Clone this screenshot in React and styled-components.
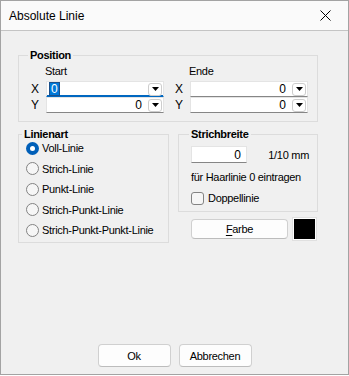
import React from "react";
import styled, { createGlobalStyle, css } from "styled-components";

const GlobalStyle = createGlobalStyle`
  html, body { margin: 0; padding: 0; background: #ffffff; }
  body {
    font-family: "Liberation Sans", Arial, sans-serif;
    font-size: 11px;
    letter-spacing: -0.3px;
    color: #000;
  }
  * { box-sizing: border-box; }
`;

const Window = styled.div`
  width: 349px;
  height: 375px;
  border: 1px solid #a3a3a3;
  background: #f0f0f0;
  display: flex;
  flex-direction: column;
`;

const TitleBar = styled.div`
  height: 30px;
  flex: none;
  background: #fafafa;
  border-bottom: 1px solid #c4c4c4;
  display: flex;
  align-items: center;
  justify-content: space-between;
  padding-left: 8px;
  font-size: 12px;
  letter-spacing: 0;
`;

const CloseButton = styled.div`
  width: 46px;
  height: 29px;
  display: flex;
  align-items: center;
  justify-content: center;
`;

const Content = styled.div`
  padding: 24px 0 0 17px;
`;

const Group = styled.div`
  width: ${(p) => p.$w}px;
  border: 1px solid #dcdcdc;
`;

const Legend = styled.div`
  height: 14px;
  line-height: 14px;
  margin: -8px 0 ${(p) => p.$mb ?? 0}px ${(p) => p.$x}px;
  padding: 0 2px;
  width: max-content;
  background: #f0f0f0;
  font-weight: bold;
`;

const PosGrid = styled.div`
  display: grid;
  grid-template-columns: 15px 118px 26px 118px;
  grid-template-rows: 17px 16px 16px;
  padding: 2px 9px 8px 12px;
  align-items: center;
`;

const HeaderLabel = styled.div`
  line-height: 14px;
  align-self: start;
  margin-left: -1px;
`;

const AxisLabel = styled.div`
  line-height: 16px;
  font-size: 12px;
  padding-left: ${(p) => p.$indent || 0}px;
`;

const Field = styled.div`
  height: ${(p) => p.$h || 16}px;
  width: ${(p) => (p.$w ? p.$w + "px" : "auto")};
  background: #ffffff;
  border: 1px solid #e4e4e4;
  border-bottom: 1px solid ${(p) => (p.$focused ? "#0067c0" : "#868686")};
  ${(p) =>
    p.$focused &&
    css`
      box-shadow: inset 0 -1px 0 #0067c0;
    `}
  display: flex;
  align-items: center;
  justify-content: ${(p) => (p.$left ? "flex-start" : "flex-end")};
  padding: 0 ${(p) => p.$pr ?? 1}px 0 2px;
  font-size: 12px;
  letter-spacing: 0;
`;

const Value = styled.span`
  padding-right: ${(p) => p.$pr ?? 0}px;
  line-height: 12px;
  ${(p) =>
    p.$selected &&
    css`
      background: #0078d7;
      color: #ffffff;
      outline: 1px solid #1a4f8a;
      padding: 0 1px;
      margin-left: 1px;
    `}
  ${(p) =>
    p.$grow &&
    css`
      margin-right: auto;
    `}
`;

const DropButton = styled.div`
  width: 14px;
  height: 13px;
  border: 1px solid #cdcdcd;
  border-radius: 3px;
  background: #ffffff;
  display: flex;
  align-items: center;
  justify-content: center;
`;

const Row2 = styled.div`
  display: flex;
  gap: 9px;
  margin-top: 12px;
  align-items: flex-start;
`;

const RightColumn = styled.div`
  display: flex;
  flex-direction: column;
  width: 140px;
`;

const RadioList = styled.div`
  display: flex;
  flex-direction: column;
  padding: 0 0 1px 7px;
`;

const RadioRow = styled.div`
  height: 20.5px;
  display: flex;
  align-items: center;
  gap: 3px;
  line-height: 14px;
`;

const RadioCircle = styled.span`
  width: 13px;
  height: 13px;
  border-radius: 50%;
  flex: none;
  display: flex;
  align-items: center;
  justify-content: center;
  ${(p) =>
    p.$checked
      ? css`
          background: #005fb8;
          &::after {
            content: "";
            width: 5px;
            height: 5px;
            border-radius: 50%;
            background: #ffffff;
          }
        `
      : css`
          background: #f6f6f6;
          border: 1px solid #838383;
        `}
`;

const WidthRow = styled.div`
  display: flex;
  align-items: center;
  justify-content: space-between;
  margin: 5px 8px 0 12px;
`;

const PlainText = styled.div`
  line-height: 14px;
  margin: ${(p) => p.$m || "0"};
`;

const CheckRow = styled.div`
  display: flex;
  align-items: center;
  gap: 4px;
  height: 14px;
  margin: 7px 0 6px 12px;
`;

const CheckBox = styled.span`
  width: 13px;
  height: 13px;
  border-radius: 3px;
  border: 1px solid #838383;
  background: #f6f6f6;
  flex: none;
`;

const ColorRow = styled.div`
  display: flex;
  align-items: center;
  gap: 5px;
  margin: 6px 0 0 13px;
`;

const Button = styled.div`
  width: ${(p) => p.$w}px;
  height: ${(p) => p.$h}px;
  background: #fdfdfd;
  border: 1px solid #d0d0d0;
  border-bottom-color: #bcbcbc;
  border-radius: 4px;
  display: flex;
  align-items: center;
  justify-content: center;
  line-height: 14px;
`;

const Swatch = styled.div`
  width: 23px;
  height: 22px;
  background: #000000;
  border: 1px solid #ffffff;
  outline: 1px solid #e0e0e0;
`;

const Footer = styled.div`
  margin-top: auto;
  display: flex;
  justify-content: center;
  gap: 8px;
  padding-bottom: 7px;
`;

const Underlined = styled.span`
  text-decoration: underline;
  text-underline-offset: 2px;
`;

const Arrow = () => (
  <svg width="7" height="4" viewBox="0 0 7 4">
    <path d="M0 0H7L3.5 4Z" fill="#000" />
  </svg>
);

const Drop = () => (
  <DropButton>
    <Arrow />
  </DropButton>
);

function PosField({ focused }) {
  return (
    <Field $focused={focused} $left={focused}>
      {focused ? (
        <Value $selected $grow>
          0
        </Value>
      ) : (
        <Value $pr={6}>0</Value>
      )}
      <Drop />
    </Field>
  );
}

const lineTypes = [
  "Voll-Linie",
  "Strich-Linie",
  "Punkt-Linie",
  "Strich-Punkt-Linie",
  "Strich-Punkt-Punkt-Linie",
];

export default function App() {
  return (
    <>
      <GlobalStyle />
      <Window>
        <TitleBar>
          <span>Absolute Linie</span>
          <CloseButton>
            <svg width="11" height="11" viewBox="0 0 11 11">
              <path d="M0.5 0.5L10.5 10.5M10.5 0.5L0.5 10.5" stroke="#000" strokeWidth="1" />
            </svg>
          </CloseButton>
        </TitleBar>
        <Content>
          <Group $w={300}>
            <Legend $x={9}>Position</Legend>
            <PosGrid>
              <span />
              <HeaderLabel>Start</HeaderLabel>
              <span />
              <HeaderLabel>Ende</HeaderLabel>
              <AxisLabel>X</AxisLabel>
              <PosField focused />
              <AxisLabel $indent={11}>X</AxisLabel>
              <PosField />
              <AxisLabel>Y</AxisLabel>
              <PosField />
              <AxisLabel $indent={11}>Y</AxisLabel>
              <PosField />
            </PosGrid>
          </Group>
          <Row2>
            <Group $w={151}>
              <Legend $x={3} $mb={-3}>
                Linienart
              </Legend>
              <RadioList>
                {lineTypes.map((t, i) => (
                  <RadioRow key={t}>
                    <RadioCircle $checked={i === 0} />
                    <span>{t}</span>
                  </RadioRow>
                ))}
              </RadioList>
            </Group>
            <RightColumn>
              <Group $w={140}>
                <Legend $x={10}>Strichbreite</Legend>
                <WidthRow>
                  <Field $w={56} $h={17} $pr={5}>
                    <Value>0</Value>
                  </Field>
                  <PlainText>1/10 mm</PlainText>
                </WidthRow>
                <PlainText $m="7px 0 0 12px">für Haarlinie 0 eintragen</PlainText>
                <CheckRow>
                  <CheckBox />
                  <span>Doppellinie</span>
                </CheckRow>
              </Group>
              <ColorRow>
                <Button $w={97} $h={20}>
                  <span>
                    <Underlined>F</Underlined>arbe
                  </span>
                </Button>
                <Swatch />
              </ColorRow>
            </RightColumn>
          </Row2>
        </Content>
        <Footer>
          <Button $w={73} $h={23}>
            Ok
          </Button>
          <Button $w={73} $h={23}>
            Abbrechen
          </Button>
        </Footer>
      </Window>
    </>
  );
}
